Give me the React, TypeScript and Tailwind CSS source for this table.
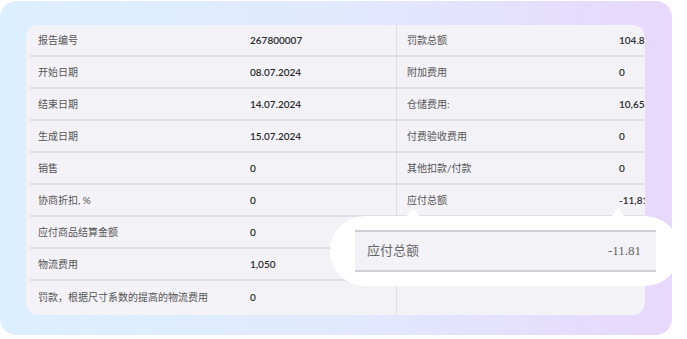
import React from "react";

const left: [string, string][] = [
  ["报告编号", "267800007"],
  ["开始日期", "08.07.2024"],
  ["结束日期", "14.07.2024"],
  ["生成日期", "15.07.2024"],
  ["销售", "0"],
  ["协商折扣, %", "0"],
  ["应付商品结算金额", "0"],
  ["物流费用", "1,050"],
  ["罚款，根据尺寸系数的提高的物流费用", "0"],
];

const right: [string, string][] = [
  ["罚款总额", "104.85"],
  ["附加费用", "0"],
  ["仓储费用:", "10,658"],
  ["付费验收费用", "0"],
  ["其他扣款/付款", "0"],
  ["应付总额", "-11,81"],
  ["", ""],
  ["", ""],
  ["", ""],
];

const font = { fontFamily: 'Lato, "Noto Sans CJK SC", sans-serif' };

export default function App() {
  return (
    <div className="w-[687px] h-[339px] bg-white overflow-hidden" style={font}>
      <div className="relative mt-px w-[672px] h-[334px] rounded-[16px] bg-gradient-to-r from-[#dcefff] via-[#e1e9ff] to-[#e7d8fc] pt-[24px] pl-[26px]">
        <div className="flex w-[619px] h-[290px] rounded-[12px] bg-[#f3f2f7] overflow-hidden">
          <div className="w-[371px] shrink-0 pl-[4px] border-r border-[#dddce2]">
            {left.map(([l, v], i) => (
              <div
                key={i}
                className={`flex items-center h-[32px] text-[10px] ${i < left.length - 1 ? "border-b-2 border-[#e0dfe5]" : ""}`}
              >
                <div className="w-[220px] shrink-0 pl-[8px] text-[#555]">{l}</div>
                <div className="font-semibold text-[#2a2a2a] whitespace-nowrap">{v}</div>
              </div>
            ))}
          </div>
          <div className="flex-1 min-w-0">
            {right.map(([l, v], i) => (
              <div
                key={i}
                className={`flex items-center h-[32px] text-[10px] ${i < right.length - 1 ? "border-b-2 border-[#e0dfe5]" : ""}`}
              >
                <div className="w-[222px] shrink-0 pl-[10px] text-[#555]">{l}</div>
                <div className="font-semibold text-[#2a2a2a] whitespace-nowrap">{v}</div>
              </div>
            ))}
          </div>
        </div>

        {/* callout */}
        <div className="absolute left-[330px] top-[215px] w-[350px] h-[70px]">
          <div className="absolute left-[76px] -top-[8px] w-0 h-0 border-l-[7px] border-r-[7px] border-b-[9px] border-l-transparent border-r-transparent border-b-white" />
          <div className="absolute left-[281px] -top-[8px] w-0 h-0 border-l-[7px] border-r-[7px] border-b-[9px] border-l-transparent border-r-transparent border-b-white" />
          <div className="w-full h-full rounded-[35px] bg-white flex items-center pl-[25px]">
            <div
              className="w-[301px] h-[42px] bg-[#f3f2f7] border-y-2 border-[#cfced6] flex items-center justify-between pl-[12px] pr-[15px] text-[13px] text-[#666]"
              style={{ fontFamily: '"Liberation Serif", "Noto Sans CJK SC", serif' }}
            >
              <span>应付总额</span>
              <span>-11.81</span>
            </div>
          </div>
        </div>
      </div>
    </div>
  );
}
